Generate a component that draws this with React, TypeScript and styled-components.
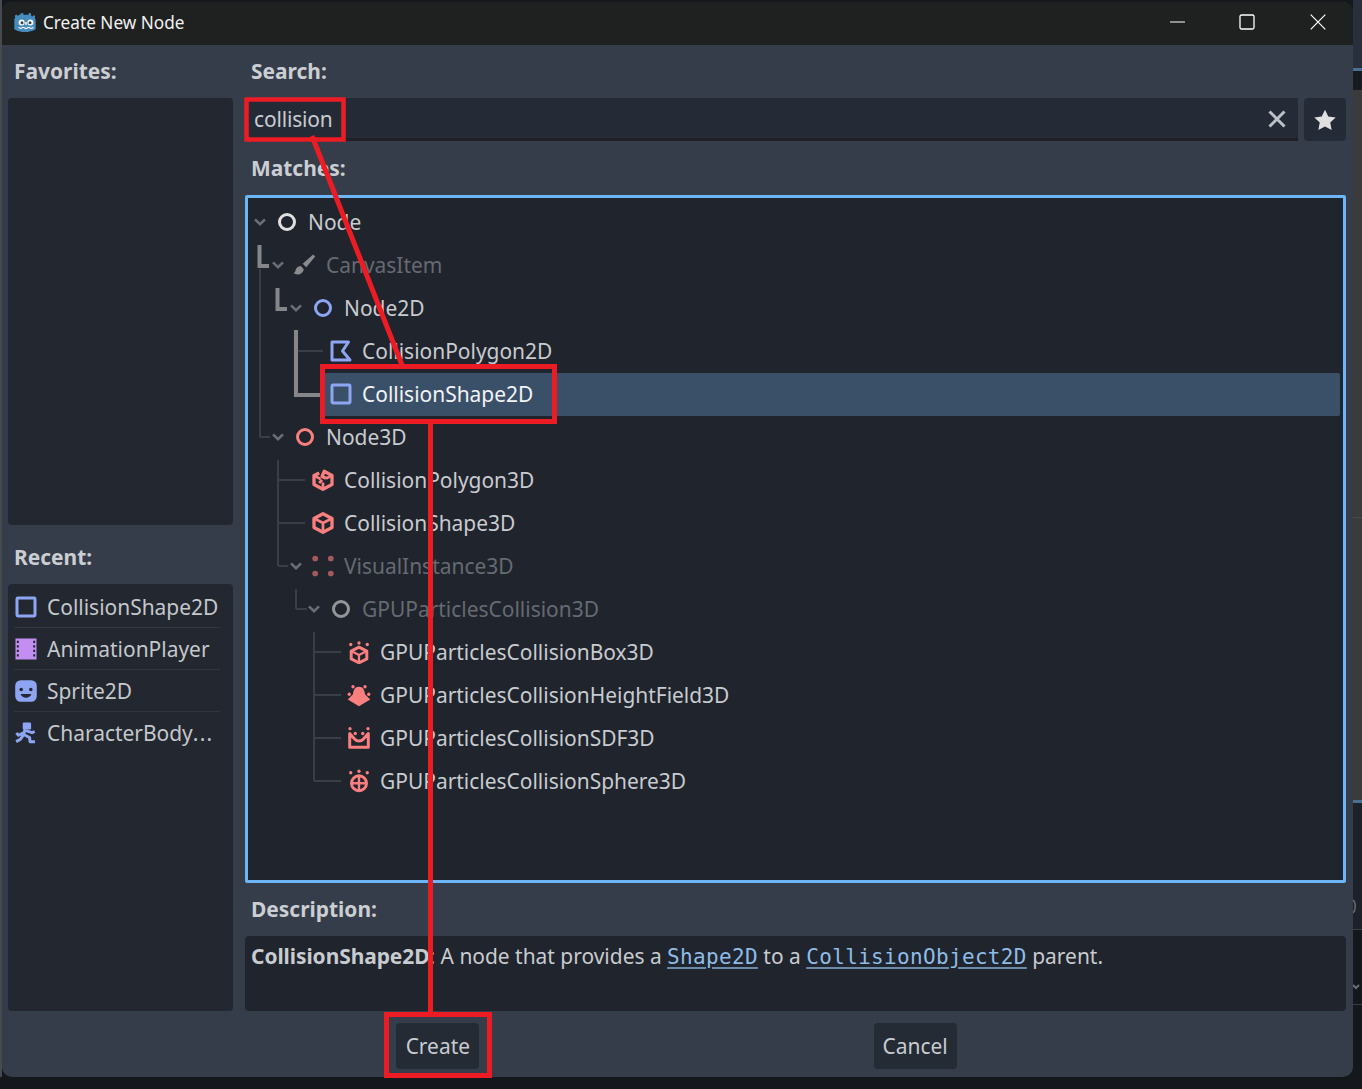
import React from "react";
import styled, { createGlobalStyle } from "styled-components";

const Global = createGlobalStyle`
  html, body { margin: 0; padding: 0; background: #14171c; }
  * { box-sizing: border-box; }
`;

const Desktop = styled.div`
  position: relative;
  width: 1362px;
  height: 1089px;
  overflow: hidden;
  padding: 2px 9px 12px 2px;
  background: #14171c;
  font-family: "Noto Sans", sans-serif;
  font-size: 20.94px;
  color: #c8cbd0;
`;

const BackdropStrip = styled.div`
  position: absolute;
  top: 0;
  right: 0;
  width: 9px;
  height: 1089px;
  background: linear-gradient(
    to bottom,
    #2a303b 0 68px,
    #4d6f8f 68px 71px,
    #171a20 71px 90px,
    #3b3b3b 90px 517px,
    #4a4a4a 517px 518px,
    #3b3b3b 518px 800px,
    #4d6f8f 800px 803px,
    #1d2129 803px 929px,
    #3a3d44 929px 930px,
    #14171c 930px 1004px,
    #3a3d44 1004px 1005px,
    #14171c 1005px
  );
`;

const BackdropEdge = styled.div`
  position: absolute;
  top: 0;
  left: 0;
  width: 2px;
  height: 1077px;
  background: #474a4f;
`;

const Dialog = styled.div`
  position: relative;
  width: 1351px;
  height: 1075px;
  display: flex;
  flex-direction: column;
  background: #363d4a;
  border-radius: 10px;
  overflow: hidden;
`;

const TitleBar = styled.header`
  height: 43px;
  flex: none;
  display: flex;
  align-items: center;
  background: #1f2020;
  padding: 0 0 3px 12px;
`;

const TitleText = styled.span`
  margin-left: 5px;
  font-size: 17.2px;
  color: #f2f2f2;
  flex: 1;
`;

const WindowButton = styled.span`
  width: 71px;
  height: 40px;
  display: flex;
  align-items: center;
  justify-content: center;
  color: #fff;
`;

const MinimizeButton = styled(WindowButton)`
  padding-left: 4px;
`;

const Main = styled.div`
  flex: 1;
  min-height: 0;
  display: grid;
  grid-template-columns: 225px 1101px;
  column-gap: 12px;
  padding: 0 7px 0 6px;
`;

const Column = styled.div`
  display: flex;
  flex-direction: column;
  min-height: 0;
`;

const Heading = styled.div`
  height: 53px;
  flex: none;
  display: flex;
  align-items: center;
  padding: 0 0 2px 6px;
  font-weight: 700;
  color: #cbced2;
`;

const RecentHeading = styled(Heading)`
  height: 59px;
  padding: 4px 0 0 6px;
`;

const Panel = styled.div`
  height: 427px;
  flex: none;
  background: #232730;
  border-radius: 4px;
`;

const RecentPanel = styled(Panel)`
  padding: 2px 13px 0 6px;
`;

const RecentRow = styled.div`
  height: 42px;
  display: flex;
  align-items: center;
  gap: 9px;
  color: #c4c7cc;
  border-bottom: 1px solid #31363f;
  white-space: nowrap;

  &:last-child {
    border-bottom-color: transparent;
  }
`;

const Dotted = styled.span`
  letter-spacing: 1.3px;
`;

const SearchRow = styled.div`
  display: flex;
  gap: 6px;
  height: 43px;
  flex: none;
  margin-bottom: 1px;
`;

const SearchField = styled.div`
  flex: 1;
  display: flex;
  align-items: center;
  justify-content: space-between;
  padding: 2px 11px 0 9px;
  background: #252b36;
  border-bottom: 3px solid #1f2127;
  border-radius: 4px 0 0 0;
  color: #c8cbd0;
`;

const SearchText = styled.span`
  letter-spacing: -0.15px;
`;

const StarButton = styled.div`
  width: 42px;
  display: flex;
  align-items: center;
  justify-content: center;
  padding-top: 1px;
  background: #252b36;
  border-radius: 4px;
`;

const TreePanel = styled.div`
  position: relative;
  flex: 1;
  min-height: 0;
  background: #20242c;
  border: 3px solid #6cb6f8;
  border-radius: 2px;
  padding: 3px 3px 0;
`;

const GuideLayer = styled.svg`
  position: absolute;
  left: -3px;
  top: -3px;
  pointer-events: none;
`;

const Row = styled.div<{ $level: number }>`
  height: 43px;
  display: flex;
  align-items: stretch;
  padding-left: ${(p) => p.$level * 18}px;
`;

const ChevronSlot = styled.span<{ $hidden?: boolean }>`
  width: 18px;
  flex: none;
  display: flex;
  align-items: center;
  justify-content: center;
  padding-bottom: 2px;
  visibility: ${(p) => (p.$hidden ? "hidden" : "visible")};
  color: #6a6e75;
`;

const RowBody = styled.div<{ $selected?: boolean; $disabled?: boolean }>`
  flex: 1;
  display: flex;
  align-items: center;
  gap: 9px;
  padding: 0 0 2px 6px;
  border-radius: 2px;
  background: ${(p) => (p.$selected ? "#3a5068" : "transparent")};
  color: ${(p) => (p.$selected ? "#f2f4f7" : p.$disabled ? "#666a72" : "#c8cbd0")};

  & > svg {
    opacity: ${(p) => (p.$disabled ? 0.6 : 1)};
  }
`;

const Description = styled.div`
  height: 75px;
  flex: none;
  background: #20242c;
  border-radius: 4px;
  padding: 6px 6px 0;
  line-height: 29px;
  color: #c8cbd0;
  white-space: nowrap;
`;

const Strong = styled.b`
  font-weight: 700;
  letter-spacing: -0.06px;
`;

const CodeLink = styled.span`
  font-family: "DejaVu Sans Mono", monospace;
  font-size: 21px;
  letter-spacing: 0.33px;
  color: #8fbce6;
  text-decoration: underline;
  text-decoration-color: #6a8aa8;
  text-underline-offset: 3px;
`;

const Footer = styled.footer`
  height: 66px;
  flex: none;
  display: flex;
  justify-content: space-evenly;
  padding: 12px 2px 0 0;
`;

const Button = styled.div`
  width: 83px;
  height: 46px;
  display: flex;
  align-items: center;
  justify-content: center;
  background: #252b35;
  border-radius: 4px;
  color: #c8cbd0;
`;

const Annotation = styled.svg`
  position: absolute;
  left: 0;
  top: 0;
  pointer-events: none;
`;

type IconProps = { c?: string };
const Ic: React.FC<React.PropsWithChildren> = ({ children }) => (
  <svg width="24" height="24" viewBox="0 0 16 16" style={{ flex: "none" }}>
    {children}
  </svg>
);

const Ring = ({ c = "#e0e0e0" }: IconProps) => (
  <Ic>
    <circle cx="8" cy="8" r="5" fill="none" stroke={c} strokeWidth="2" />
  </Ic>
);
const Brush = () => (
  <Ic>
    <path d="M14.800 2.400 13.400 1 6.500 7.200l2.300 2.300z" fill="#d0d0d0" />
    <path d="M5.200 8.600c-2 .2-3.400 1.400-3.600 3.200-.1.900-.6 1.300-1.200 1.700 2 1.400 6 1.200 6.800-2.700z" fill="#d0d0d0" />
  </Ic>
);
const Poly2D = () => (
  <Ic>
    <path d="M2 2h11L9 8l5 6H2z" fill="none" stroke="#8da5f3" strokeWidth="2" strokeLinejoin="round" />
  </Ic>
);
const Square2D = () => (
  <Ic>
    <rect x="2" y="2" width="12" height="12" rx=".6" fill="none" stroke="#8da5f3" strokeWidth="2" />
  </Ic>
);
const Cube = () => (
  <Ic>
    <path d="M8 1.800 14 5v6l-6 3.200L2 11V5z" fill="none" stroke="#fc7f7f" strokeWidth="2.200" strokeLinejoin="round" />
    <path d="M2.500 5.200 8 8l5.500-2.800M8 8v6" fill="none" stroke="#fc7f7f" strokeWidth="1.800" />
  </Ic>
);
const CubeBroken = () => (
  <Ic>
    <path d="M5.500 3.400 2 5v6l6 3.200 6-3.200V5L8.800 2.200 7.400 5.600 10 6.800" fill="none" stroke="#fc7f7f" strokeWidth="2.200" strokeLinejoin="round" />
    <path d="M2.500 5.200 6.400 7.400M13.500 5.200 10 7M8 9.600V14M5.400 10 7.400 8" fill="none" stroke="#fc7f7f" strokeWidth="1.800" />
  </Ic>
);
const Dots = () => (
  <Ic>
    <circle cx="2.800" cy="3" r="1.900" fill="#fc7f7f" />
    <circle cx="13.200" cy="3" r="1.900" fill="#fc7f7f" />
    <circle cx="2.800" cy="13" r="1.900" fill="#fc7f7f" />
    <circle cx="13.200" cy="13" r="1.900" fill="#fc7f7f" />
  </Ic>
);
const Sparks = ({ y = 2 }: { y?: number }) => (
  <g fill="#fc7f7f">
    <circle cx="2.500" cy={y + 1} r="1.100" />
    <circle cx="8" cy={y} r="1.100" />
    <circle cx="13.500" cy={y + 1} r="1.100" />
  </g>
);
const GpuBox = () => (
  <Ic>
    <Sparks />
    <path d="M8 4.800 13.200 7.400v5.200L8 15.200l-5.200-2.600V7.400z" fill="none" stroke="#fc7f7f" strokeWidth="2" strokeLinejoin="round" />
    <path d="M3.400 7.600 8 10l4.600-2.400M8 10v5" fill="none" stroke="#fc7f7f" strokeWidth="1.500" />
  </Ic>
);
const GpuBell = () => (
  <Ic>
    <circle cx="1.500" cy="7.500" r="1.100" fill="#fc7f7f" />
    <circle cx="4" cy="2.500" r="1.100" fill="#fc7f7f" />
    <circle cx="12" cy="2.500" r="1.100" fill="#fc7f7f" />
    <circle cx="14.500" cy="7.500" r="1.100" fill="#fc7f7f" />
    <path d="M8 2.500c2.800 0 3.800 2.400 4 5L15.500 11 8 15.500.5 11 4 7.500c.2-2.600 1.200-5 4-5z" fill="#fc7f7f" />
  </Ic>
);
const GpuSdf = () => (
  <Ic>
    <circle cx="5.500" cy="5" r="1.100" fill="#fc7f7f" />
    <circle cx="10.500" cy="5" r="1.100" fill="#fc7f7f" />
    <circle cx="2" cy="1.800" r="1.100" fill="#fc7f7f" />
    <circle cx="14" cy="1.800" r="1.100" fill="#fc7f7f" />
    <path d="M1.800 5v9.200h12.400V5l-3.400 3.800a3.800 3.800 0 0 1-5.600 0z" fill="none" stroke="#fc7f7f" strokeWidth="2" strokeLinejoin="round" />
  </Ic>
);
const GpuSphere = () => (
  <Ic>
    <Sparks y={1.500} />
    <circle cx="8" cy="9.500" r="5" fill="none" stroke="#fc7f7f" strokeWidth="2" />
    <path d="M8 4.500v10M3 9.500h10" stroke="#fc7f7f" strokeWidth="1.600" />
  </Ic>
);
const Film = () => (
  <Ic>
    <rect x="1" y="1" width="14" height="14" fill="#c38ef1" />
    <g fill="#232730">
      {[2.500, 5.500, 8.500, 11.500].map((y) => (
        <React.Fragment key={y}>
          <rect x="1.900" y={y} width="1.300" height="1.500" />
          <rect x="12.800" y={y} width="1.300" height="1.500" />
        </React.Fragment>
      ))}
    </g>
  </Ic>
);
const Sprite = () => (
  <Ic>
    <path d="M4.500.8h7a3.700 3.700 0 0 1 3.700 3.700v7a3.700 3.700 0 0 1-3.700 3.700h-7A3.700 3.700 0 0 1 .8 11.500v-7A3.700 3.700 0 0 1 4.500.8z" fill="#8da5f3" />
    <circle cx="4.800" cy="7" r="1.200" fill="#232730" />
    <circle cx="11.200" cy="7" r="1.200" fill="#232730" />
    <path d="M4.400 10c.6 1.700 2 2.500 3.600 2.500s3-.8 3.600-2.500z" fill="#232730" />
  </Ic>
);
const Runner = () => (
  <Ic>
    <rect x="5.800" y="1" width="5.600" height="4.600" rx=".8" fill="#8da5f3" />
    <path d="M7.400 5.400 6.400 9l4 2 .3 2.800h3.300M6.600 7.800 3 9.500 1.600 8M6.200 9.500l-2 2.800-2.800 1.400M8 6.400l4 1.400 1.800-.8" fill="none" stroke="#8da5f3" strokeWidth="2" strokeLinejoin="round" />
  </Ic>
);

const GodotLogo = () => (
  <svg width="24" height="24" viewBox="0 0 24 24" style={{ flex: "none" }}>
    <path
      d="M7 3.400 9 2.800l.7 2.100c1.500-.3 3.100-.3 4.600 0l.7-2.100 2 .6.2 2.400 1 .6 1.700-1.400 1.400 1.600-.6 1.400c.4.600.8 1.200 1 1.900v9.300c-3 1.900-6.800 2.800-10.700 2.800s-7.700-.9-10.700-2.800V9.300c.2-.7.600-1.300 1-1.900l-.6-1.400 1.400-1.600 1.700 1.400 1-.6z"
      fill="#478cbf"
    />
    <circle cx="7.600" cy="12.500" r="3" fill="#fff" />
    <circle cx="16.400" cy="12.500" r="3" fill="#fff" />
    <circle cx="8" cy="12.800" r="1.500" fill="#414042" />
    <circle cx="16" cy="12.800" r="1.500" fill="#414042" />
    <rect x="11.200" y="12" width="1.600" height="3" rx=".8" fill="#fff" />
    <path d="M4.500 17.500 7 18.500l2-1.200 3 1.300 3-1.300 2 1.200 2.500-1" fill="none" stroke="#fff" strokeWidth="1.100" />
  </svg>
);

const Chevron = () => (
  <svg width="16" height="16" viewBox="0 0 16 16">
    <path d="M3 5.400 8 10.300l5-4.900" fill="none" stroke="currentColor" strokeWidth="2.600" />
  </svg>
);

type TreeItem = {
  label: string;
  level: number;
  icon: React.ReactNode;
  expandable?: boolean;
  disabled?: boolean;
  selected?: boolean;
};

const treeItems: TreeItem[] = [
  { label: "Node", level: 0, icon: <Ring />, expandable: true },
  { label: "CanvasItem", level: 1, icon: <Brush />, expandable: true, disabled: true },
  { label: "Node2D", level: 2, icon: <Ring c="#8da5f3" />, expandable: true },
  { label: "CollisionPolygon2D", level: 3, icon: <Poly2D /> },
  { label: "CollisionShape2D", level: 3, icon: <Square2D />, selected: true },
  { label: "Node3D", level: 1, icon: <Ring c="#fc7f7f" />, expandable: true },
  { label: "CollisionPolygon3D", level: 2, icon: <CubeBroken /> },
  { label: "CollisionShape3D", level: 2, icon: <Cube /> },
  { label: "VisualInstance3D", level: 2, icon: <Dots />, expandable: true, disabled: true },
  { label: "GPUParticlesCollision3D", level: 3, icon: <Ring c="#e0e0e0" />, expandable: true, disabled: true },
  { label: "GPUParticlesCollisionBox3D", level: 4, icon: <GpuBox /> },
  { label: "GPUParticlesCollisionHeightField3D", level: 4, icon: <GpuBell /> },
  { label: "GPUParticlesCollisionSDF3D", level: 4, icon: <GpuSdf /> },
  { label: "GPUParticlesCollisionSphere3D", level: 4, icon: <GpuSphere /> },
];

const recentItems = [
  { key: "shape", label: "CollisionShape2D", icon: <Square2D /> },
  { key: "anim", label: "AnimationPlayer", icon: <Film /> },
  { key: "sprite", label: "Sprite2D", icon: <Sprite /> },
  {
    key: "body",
    label: (
      <span>
        CharacterBody<Dotted>...</Dotted>
      </span>
    ),
    icon: <Runner />,
  },
];

// Guide coordinates use page pixels; the layer's viewBox maps them onto the tree panel.
const ox = 245;
const oy = 195;
const thin: [number, number, number, number][] = [
  [260, 269, 260, 437],
  [260, 437, 270, 437],
  [278, 460, 278, 566],
  [278, 480, 305, 480],
  [278, 523, 305, 523],
  [278, 566, 288, 566],
  [296, 589, 296, 609],
  [296, 609, 307, 609],
  [314, 632, 314, 781],
  [314, 652, 341, 652],
  [314, 695, 341, 695],
  [314, 738, 341, 738],
  [314, 781, 341, 781],
  [298, 351, 323, 351],
];
const bold = ["M259.500 245V266H269", "M277.500 288V309H287", "M296 330V395H321"];

const App = () => (
  <Desktop>
    <Global />
    <BackdropStrip>
      <svg width="9" height="1089" viewBox="0 0 9 1089">
        <path d="M0 900c3 2 3 10 0 13" fill="none" stroke="#6a6d72" strokeWidth="1.500" />
        <path d="M0 985l3 3 3-3" fill="none" stroke="#6a6d72" strokeWidth="2" />
      </svg>
    </BackdropStrip>
    <BackdropEdge />
    <Dialog>
      <TitleBar>
        <GodotLogo />
        <TitleText>Create New Node</TitleText>
        <MinimizeButton>
          <svg width="16" height="16" viewBox="0 0 16 16">
            <path d="M0 8h15" stroke="currentColor" strokeWidth="1.200" />
          </svg>
        </MinimizeButton>
        <WindowButton>
          <svg width="16" height="16" viewBox="0 0 16 16">
            <rect x="1" y="1" width="14" height="14" rx="1.500" fill="none" stroke="currentColor" strokeWidth="1.300" />
          </svg>
        </WindowButton>
        <WindowButton>
          <svg width="16" height="16" viewBox="0 0 16 16">
            <path d="M.7.700 15.300 15.300M15.300.700.700 15.300" stroke="currentColor" strokeWidth="1.200" />
          </svg>
        </WindowButton>
      </TitleBar>
      <Main>
        <Column>
          <Heading>Favorites:</Heading>
          <Panel />
          <RecentHeading>Recent:</RecentHeading>
          <RecentPanel>
            {recentItems.map((r) => (
              <RecentRow key={r.key}>
                {r.icon}
                {r.label}
              </RecentRow>
            ))}
          </RecentPanel>
        </Column>
        <Column>
          <Heading>Search:</Heading>
          <SearchRow>
            <SearchField>
              <SearchText>collision</SearchText>
              <svg width="20" height="20" viewBox="0 0 20 20">
                <path d="M2.500 2.500 17.500 17.500M17.500 2.500 2.500 17.500" stroke="#bdc0c5" strokeWidth="3" />
              </svg>
            </SearchField>
            <StarButton>
              <svg width="24" height="24" viewBox="0 0 22 22">
                <path d="M11 1.500 14 7.800l6.800.9-5 4.700 1.300 6.800L11 17l-6.100 3.200 1.300-6.800-5-4.700L8 7.800z" fill="#e0e0e0" />
              </svg>
            </StarButton>
          </SearchRow>
          <Heading>Matches:</Heading>
          <TreePanel>
            <GuideLayer width="1101" height="688" viewBox={`${ox} ${oy} 1101 688`}>
              {thin.map(([a, b, c, d], i) => (
                <line key={i} x1={a} y1={b} x2={c} y2={d} stroke="#3a3e46" strokeWidth="2" />
              ))}
              {bold.map((d) => (
                <path key={d} d={d} fill="none" stroke="#85868a" strokeWidth="4" />
              ))}
            </GuideLayer>
            {treeItems.map((t) => (
              <Row key={t.label} $level={t.level}>
                <ChevronSlot $hidden={!t.expandable}>
                  <Chevron />
                </ChevronSlot>
                <RowBody $selected={t.selected} $disabled={t.disabled}>
                  {t.icon}
                  {t.label}
                </RowBody>
              </Row>
            ))}
          </TreePanel>
          <Heading>Description:</Heading>
          <Description>
            <Strong>CollisionShape2D</Strong>: A node that provides a <CodeLink>Shape2D</CodeLink> to a{" "}
            <CodeLink>CollisionObject2D</CodeLink> parent.
          </Description>
        </Column>
      </Main>
      <Footer>
        <Button>Create</Button>
        <Button>Cancel</Button>
      </Footer>
    </Dialog>
    <Annotation width="1362" height="1089" viewBox="0 0 1362 1089">
      <g fill="none" stroke="#ed1c24">
        <rect x="246.500" y="99.500" width="97" height="40" strokeWidth="4.500" />
        <rect x="322.500" y="366.500" width="232" height="55" strokeWidth="5" />
        <rect x="386.500" y="1014.500" width="103" height="61" strokeWidth="5" />
        <path d="M312 136 402 365" strokeWidth="5" />
        <path d="M430.500 421V1013" strokeWidth="5" />
      </g>
    </Annotation>
  </Desktop>
);

export default App;
